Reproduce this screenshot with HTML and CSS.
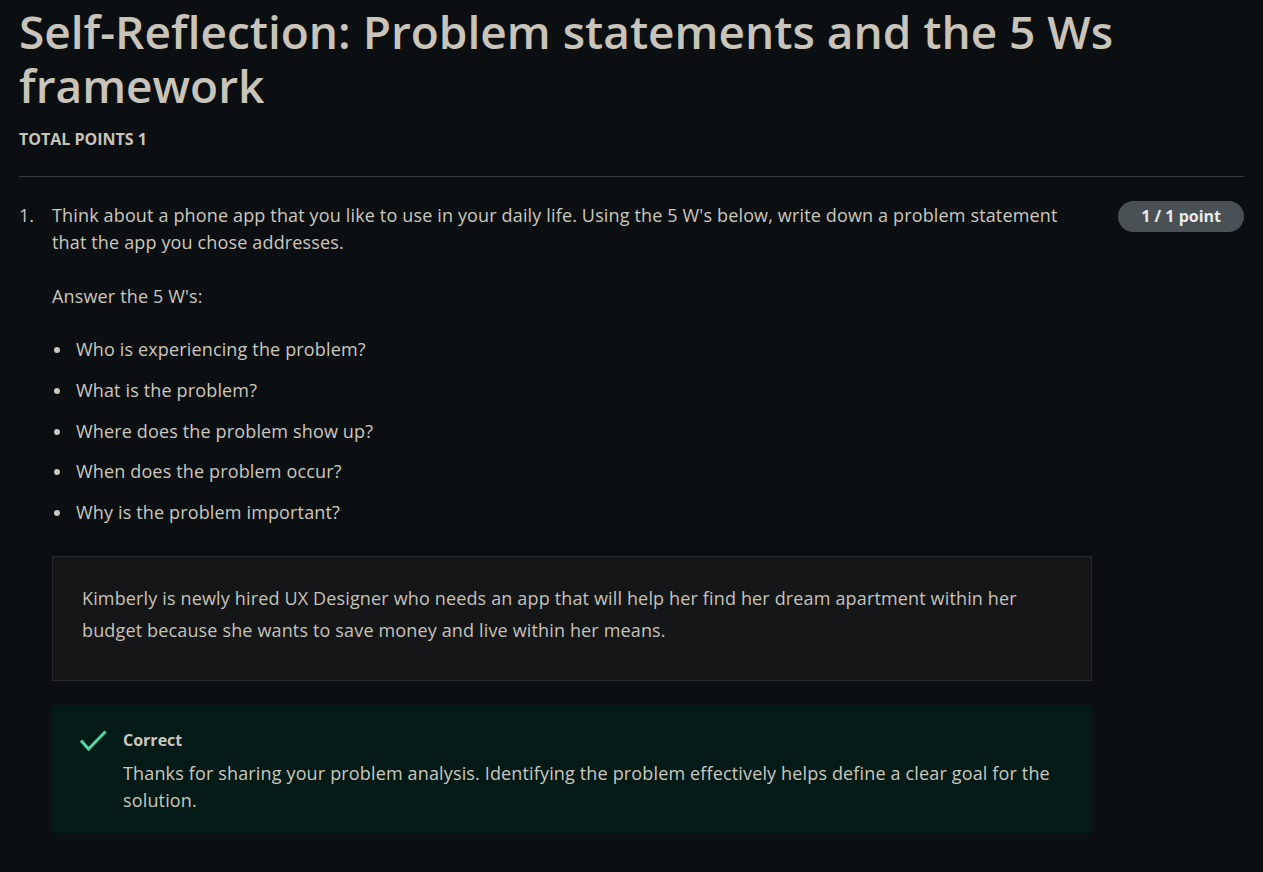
FILE: index.html
```html
<!DOCTYPE html>
<html lang="en">
<head>
<meta charset="utf-8">
<title>Self-Reflection</title>
<link rel="stylesheet" href="styles.css">
</head>
<body>
<main class="page">
  <header class="head">
    <h1 class="title">Self-Reflection: Problem statements and the 5 Ws framework</h1>
    <div class="total">TOTAL POINTS 1</div>
  </header>
  <section class="question">
    <div class="num">1.</div>
    <div class="qbody">
      <div class="qtop">
        <p class="prompt">Think about a phone app that you like to use in your daily life. Using the 5 W's below, write down a problem statement that the app you chose addresses.</p>
        <span class="pill">1 / 1 point</span>
      </div>
      <p class="sub">Answer the 5 W's:</p>
      <ul class="ws">
        <li>Who is experiencing the problem?</li>
        <li>What is the problem?</li>
        <li>Where does the problem show up?</li>
        <li>When does the problem occur?</li>
        <li>Why is the problem important?</li>
      </ul>
      <div class="answer">Kimberly is newly hired UX Designer who needs an app that will help her find her dream apartment within her budget because she wants to save money and live within her means.</div>
      <div class="feedback">
        <svg class="check" width="28" height="22" viewBox="0 0 28 22" aria-hidden="true"><path d="M2 10.5 L9.5 19 L26.5 1.5" fill="none" stroke="#4fd6a3" stroke-width="3"/></svg>
        <div class="fb-text">
          <div class="fb-title">Correct</div>
          <p class="fb-msg">Thanks for sharing your problem analysis. Identifying the problem effectively helps define a clear goal for the solution.</p>
        </div>
      </div>
    </div>
  </section>
</main>
</body>
</html>
```
FILE: styles.css
```css
html, body {
  margin: 0;
  padding: 0;
  background: #0c0f11;
}
body {
  font-family: "Open Sans", "Noto Sans", sans-serif;
  color: #cbc7bf;
}
.page {
  padding: 0 19px;
}
.head {
  border-bottom: 1px solid #34393c;
  padding-bottom: 27px;
}
.title {
  margin: 0;
  padding-top: 4px;
  font-size: 46px;
  line-height: 54px;
  font-weight: 600;
  color: #c9c4ba;
}
.total {
  margin-top: 17px;
  font-size: 16px;
  font-weight: 700;
  line-height: 20px;
  color: #c9c4ba;
}
.question {
  display: flex;
  padding-top: 25px;
}
.num {
  width: 33px;
  flex: none;
  font-size: 18px;
  line-height: 27px;
}
.qbody {
  flex: 1;
  letter-spacing: 0.15px;
}
.qtop {
  display: flex;
  align-items: flex-start;
  gap: 56px;
}
.prompt {
  margin: 0;
  flex: 1;
  font-size: 18px;
  line-height: 27px;
}
.pill {
  flex: none;
  margin-top: -1px;
  background: #4a5154;
  color: #ecebe8;
  font-size: 16px;
  font-weight: 700;
  line-height: 31px;
  padding: 0 23px;
  border-radius: 16px;
  white-space: nowrap;
  letter-spacing: 0;
}
.sub {
  margin: 27px 0 0;
  font-size: 18px;
  line-height: 27px;
}
.ws {
  list-style: none;
  margin: 26px 0 0;
  padding: 0 0 0 2px;
  font-size: 18px;
  line-height: 27px;
}
.ws li {
  display: flex;
  align-items: center;
  gap: 16px;
  margin-bottom: 14px;
}
.ws li:nth-child(4) {
  margin-top: -1px;
}
.ws li::before {
  content: "";
  flex: none;
  width: 6px;
  height: 6px;
  border-radius: 50%;
  background: #cbc7bf;
}
.ws li:last-child {
  margin-bottom: 0;
}
.answer {
  margin-top: 30px;
  width: 1040px;
  box-sizing: border-box;
  background: #151618;
  border: 1px solid #25272a;
  padding: 25px 29px 34px;
  font-size: 18px;
  line-height: 32px;
  color: #c6c2ba;
}
.feedback {
  margin-top: 24px;
  width: 1040px;
  box-sizing: border-box;
  background: #031a16;
  padding: 23px 30px 19px 27px;
  display: flex;
  gap: 16px;
}
.check {
  flex: none;
  margin-top: 2px;
}
.fb-title {
  font-size: 16px;
  font-weight: 700;
  line-height: 24px;
  letter-spacing: 0;
}
.fb-msg {
  margin: 8px 0 0;
  font-size: 18px;
  line-height: 27px;
}
```
